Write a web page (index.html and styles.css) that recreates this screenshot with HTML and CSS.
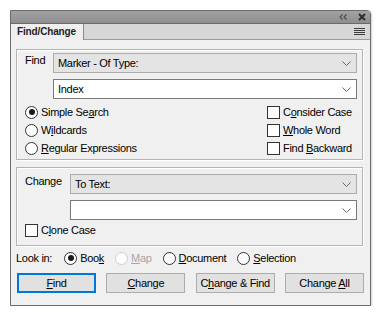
FILE: index.html
```html
<!DOCTYPE html>
<html lang="en">
<head>
    <meta charset="UTF-8">
    <title>Find/Change</title>
    <link rel="stylesheet" href="styles.css">
</head>
<body>
    <div class="panel">
        <div class="titlebar">
            <svg class="collapse" width="8" height="6" viewBox="0 0 8 6">
                <path d="M3.5 0.5L1 3L3.5 5.5M7.5 0.5L5 3L7.5 5.5" fill="none" stroke="#4a4a4a" stroke-width="1.2"/>
            </svg>
            <svg class="close" width="8" height="8" viewBox="0 0 8 8">
                <path d="M1 1L7 7M7 1L1 7" stroke="#2e2e2e" stroke-width="2"/>
            </svg>
        </div>
        <div class="tabbar">
            <div class="tab">Find/Change</div>
            <svg class="menu" width="11" height="8" viewBox="0 0 11 8">
                <path d="M0 0.5H11M0 2.5H11M0 4.5H11M0 6.5H11" stroke="#3c3c3c" stroke-width="1"/>
            </svg>
        </div>

        <div class="content">
            <!-- Find group -->
            <div class="group find-group">
                <div class="row">
                    <span class="label find-label">Find</span>
                    <div class="select">
                        <span>Marker - Of Type:</span>
                        <svg class="chev" width="9" height="5" viewBox="0 0 9 5"><path d="M0.5 0.5L4.5 4.5L8.5 0.5" fill="none" stroke="#666" stroke-width="1"/></svg>
                    </div>
                </div>
                <div class="row find-indent">
                    <div class="combo">
                        <span>Index</span>
                        <svg class="chev" width="9" height="5" viewBox="0 0 9 5"><path d="M0.5 0.5L4.5 4.5L8.5 0.5" fill="none" stroke="#666" stroke-width="1"/></svg>
                    </div>
                </div>
                <div class="options">
                    <div class="col">
                        <label class="opt"><span class="radio checked"></span>Simple Se<u>a</u>rch</label>
                        <label class="opt"><span class="radio"></span>W<u>i</u>ldcards</label>
                        <label class="opt"><span class="radio"></span><u>R</u>egular Expressions</label>
                    </div>
                    <div class="col right">
                        <label class="opt"><span class="check"></span>C<u>o</u>nsider Case</label>
                        <label class="opt"><span class="check"></span><u>W</u>hole Word</label>
                        <label class="opt"><span class="check"></span>Find&nbsp;<u>B</u>ackward</label>
                    </div>
                </div>
            </div>

            <!-- Change group -->
            <div class="group change-group">
                <div class="row">
                    <span class="label change-label">Change</span>
                    <div class="select">
                        <span>To Text:</span>
                        <svg class="chev" width="9" height="5" viewBox="0 0 9 5"><path d="M0.5 0.5L4.5 4.5L8.5 0.5" fill="none" stroke="#666" stroke-width="1"/></svg>
                    </div>
                </div>
                <div class="row change-indent">
                    <div class="combo">
                        <span></span>
                        <svg class="chev" width="9" height="5" viewBox="0 0 9 5"><path d="M0.5 0.5L4.5 4.5L8.5 0.5" fill="none" stroke="#666" stroke-width="1"/></svg>
                    </div>
                </div>
                <label class="opt clone"><span class="check"></span>C<u>l</u>one Case</label>
            </div>

            <div class="lookin">
                <span class="lookin-label">Look in:</span>
                <label class="opt"><span class="radio checked"></span>Boo<u>k</u></label>
                <label class="opt disabled"><span class="radio"></span><u>M</u>ap</label>
                <label class="opt"><span class="radio"></span><u>D</u>ocument</label>
                <label class="opt"><span class="radio"></span><u>S</u>election</label>
            </div>

            <div class="buttons">
                <button class="btn default"><u>F</u>ind</button>
                <button class="btn"><u>C</u>hange</button>
                <button class="btn">C<u>h</u>ange &amp; Find</button>
                <button class="btn">Change <u>A</u>ll</button>
            </div>
        </div>
    </div>
</body>
</html>
```

FILE: styles.css
```css
* {
    margin: 0;
    padding: 0;
    box-sizing: border-box;
}

body {
    font-family: 'Liberation Sans', Arial, sans-serif;
    font-size: 11px;
    letter-spacing: -0.3px;
    color: #000;
    background: #fff;
    padding: 10px 0 0 10px;
}

u {
    text-underline-offset: 1px;
}

.panel {
    width: 361px;
    height: 296px;
    background: #f0f0f0;
    border: 1px solid #6c6c6c;
    border-top-right-radius: 4px;
    display: flex;
    flex-direction: column;
    box-shadow: 1px 1px 2px rgba(0, 0, 0, 0.18);
}

.titlebar {
    height: 13px;
    background: linear-gradient(#a2a2a2, #8e8e8e);
    border-top-right-radius: 3px;
    border-bottom: 1px solid #6a6a6a;
    display: flex;
    align-items: center;
    justify-content: flex-end;
    padding-right: 4px;
}

.collapse {
    margin-right: 11px;
}

.tabbar {
    height: 16px;
    background: #d7d7d7;
    border-bottom: 1px solid #9c9c9c;
    display: flex;
    align-items: stretch;
    justify-content: space-between;
    padding-right: 5px;
}

.tab {
    background: #efefef;
    border-right: 1px solid #8a8a8a;
    width: 73px;
    padding-left: 6px;
    font-size: 10px;
    font-weight: bold;
    letter-spacing: -0.15px;
    line-height: 16px;
    color: #1e1e1e;
    margin-bottom: -1px;
}

.menu {
    align-self: center;
    margin-top: 1px;
}

.content {
    padding: 9px 7px 0 5px;
    display: flex;
    flex-direction: column;
}

.group {
    border: 1px solid #b4b4b4;
    box-shadow: inset 1px 1px 0 #fff, 1px 1px 0 #fff;
    padding: 3px 5px 0 8px;
}

.row {
    display: flex;
    align-items: center;
}

.label {
    line-height: 20px;
    align-self: flex-start;
    margin-top: -3px;
}

.find-label {
    width: 28px;
}

.change-label {
    width: 45px;
}

.find-indent {
    padding-left: 28px;
    margin-top: 6px;
}

.change-indent {
    padding-left: 45px;
    margin-top: 6px;
}

.select,
.combo {
    flex: 1;
    height: 20px;
    display: flex;
    align-items: center;
    justify-content: space-between;
    padding: 0 5px 0 4px;
}

.select {
    background: #e4e4e4;
    border: 1px solid #acacac;
}

.combo {
    background: #fff;
    border: 1px solid #7a7a7a;
}

.chev {
    margin-top: 1px;
}

.options {
    display: flex;
    justify-content: space-between;
    padding: 4px 0 2px 0;
}

.col {
    display: flex;
    flex-direction: column;
}

.col.right {
    width: 90px;
}

.opt {
    display: flex;
    align-items: center;
    height: 18px;
    white-space: nowrap;
}

.radio {
    width: 13px;
    height: 13px;
    flex: none;
    border: 1px solid #333;
    border-radius: 50%;
    background: #fff;
    margin-right: 3px;
    position: relative;
}

.radio.checked::after {
    content: '';
    position: absolute;
    left: 2.5px;
    top: 2.5px;
    width: 6px;
    height: 6px;
    border-radius: 50%;
    background: #1a1a1a;
}

.check {
    width: 13px;
    height: 13px;
    flex: none;
    border: 1px solid #333;
    background: #fff;
    margin-right: 3px;
}

.change-group {
    margin-top: 7px;
    padding-top: 6px;
    padding-bottom: 6px;
}

.clone {
    margin-top: 1px;
}

.lookin {
    display: flex;
    align-items: center;
    height: 18px;
    margin-top: 3px;
}

.lookin-label {
    margin-right: 12px;
}

.lookin .opt {
    margin-right: 11px;
}

.opt.disabled {
    color: #a6a6a6;
}

.opt.disabled .radio {
    border-color: #cdcdcd;
}

.buttons {
    display: flex;
    justify-content: space-between;
    margin: 6px -1px 0 1px;
}

.btn {
    width: 79px;
    height: 20px;
    background: #e1e1e1;
    border: 1px solid #adadad;
    font-family: inherit;
    font-size: 11px;
    letter-spacing: -0.3px;
    white-space: nowrap;
    color: #000;
}

.btn.default {
    border: 2px solid #0078d7;
}
```
